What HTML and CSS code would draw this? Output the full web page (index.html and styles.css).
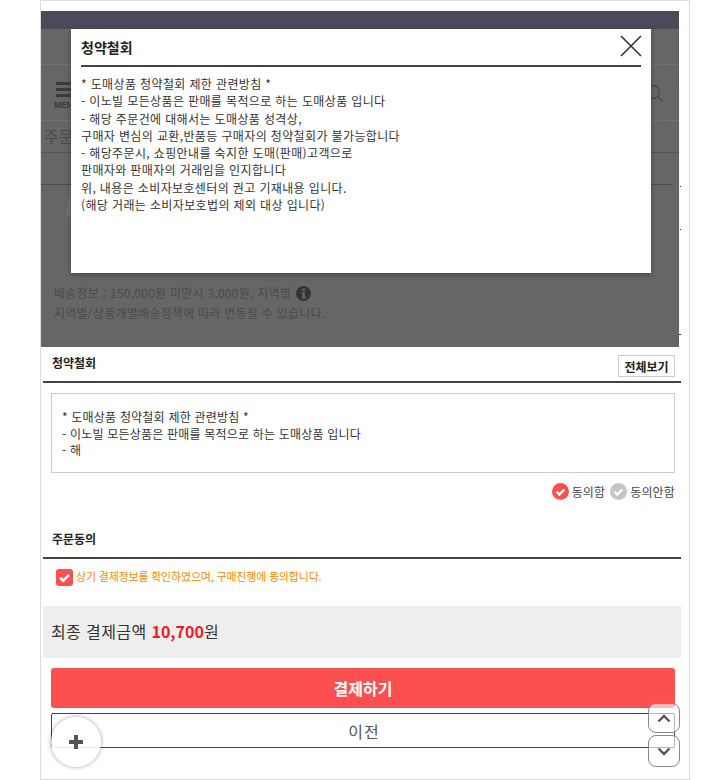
FILE: index.html
```html
<!DOCTYPE html>
<html lang="ko">

<head>
    <meta charset="UTF-8">
    <meta name="viewport" content="width=device-width, initial-scale=1.0">
    <title>주문결제</title>
    <link rel="stylesheet" href="styles.css">
</head>

<body>
    <div class="frame">
        <div class="dim">
            <div class="dim-top"></div>
            <div class="dim-row row-blank"></div>
            <div class="dim-row row-menu">
                <div class="menu-btn">
                    <span class="bar"></span>
                    <span class="bar"></span>
                    <span class="bar"></span>
                    <span class="menu-label">MENU</span>
                </div>
                <svg class="search-icon" width="27" height="26" viewBox="0 0 27 26">
                    <circle cx="16" cy="13" r="6.5" fill="none" stroke="#4a4a4a" stroke-width="1.3"/>
                    <path d="M20.6 17.6 L26 23" fill="none" stroke="#4a4a4a" stroke-width="1.3"/>
                </svg>
            </div>
            <div class="dim-row row-title">주문</div>
            <div class="dim-row row-product"></div>
            <div class="dim-row row-product-2">
                <svg class="thumb-edge" width="8" height="32" viewBox="0 0 8 32">
                    <path d="M6 0 L8 0 L8 30 L0 32 Z" fill="#717171"/>
                </svg>
            </div>
            <div class="delivery">
                <p>배송정보 : 150,000원 미만시 3,000원, 지역별
                    <svg class="info-icon" width="15" height="15" viewBox="0 0 15 15">
                        <circle cx="7.5" cy="7.5" r="7.5" fill="#333"/>
                        <rect x="6.5" y="2.5" width="2.4" height="2.4" fill="#666"/>
                        <path d="M5.5 6.2 H8.9 V10.8 H10 V12.4 H5.5 V10.8 H6.5 V7.8 H5.5 Z" fill="#666"/>
                    </svg>
                </p>
                <p>지역별/상품개별배송정책에 따라 변동될 수 있습니다.</p>
            </div>
            <div class="tick tick-1"></div>
            <div class="tick tick-2"></div>
            <div class="tick tick-3"></div>
            <div class="edge-strip"></div>

            <div class="modal">
                <div class="modal-head">
                    <h2>청약철회</h2>
                    <svg class="close-icon" width="22" height="22" viewBox="0 0 22 22">
                        <path d="M1 1 L21 21 M21 1 L1 21" fill="none" stroke="#333" stroke-width="1.6"/>
                    </svg>
                </div>
                <div class="modal-body">
                    <p>* 도매상품 청약철회 제한 관련방침 *</p>
                    <p>- 이노빌 모든상품은 판매를 목적으로 하는 도매상품 입니다</p>
                    <p>- 해당 주문건에 대해서는 도매상품 성격상,</p>
                    <p>구매자 변심의 교환,반품등 구매자의 청약철회가 불가능합니다</p>
                    <p>- 해당주문시, 쇼핑안내를 숙지한 도매(판매)고객으로</p>
                    <p>판매자와 판매자의 거래임을 인지합니다</p>
                    <p>위, 내용은 소비자보호센터의 권고 기재내용 입니다.</p>
                    <p>(해당 거래는 소비자보호법의 제외 대상 입니다)</p>
                </div>
            </div>
        </div>

        <div class="section">
            <div class="section-head">
                <h3>청약철회</h3>
                <button class="view-all">전체보기</button>
            </div>
            <div class="terms-box">
                <p>* 도매상품 청약철회 제한 관련방침 *</p>
                <p>- 이노빌 모든상품은 판매를 목적으로 하는 도매상품 입니다</p>
                <p>- 해</p>
            </div>
            <div class="agree-row">
                <svg class="check-icon" width="17" height="17" viewBox="0 0 18 18">
                    <circle cx="9" cy="9" r="9" fill="#fc5050"/>
                    <path d="M4.8 9.2 L7.8 12.2 L13.2 6.6" fill="none" stroke="#fff" stroke-width="2.6"/>
                </svg>
                <span>동의함</span>
                <svg class="check-icon" width="17" height="17" viewBox="0 0 18 18">
                    <circle cx="9" cy="9" r="9" fill="#c4c4c4"/>
                    <path d="M4.8 9.2 L7.8 12.2 L13.2 6.6" fill="none" stroke="#fff" stroke-width="2.6"/>
                </svg>
                <span>동의안함</span>
            </div>
        </div>

        <div class="section section-order">
            <div class="section-head">
                <h3>주문동의</h3>
            </div>
            <div class="order-check">
                <svg width="17" height="17" viewBox="0 0 17 17">
                    <rect width="17" height="17" rx="3" fill="#fc5050"/>
                    <path d="M4 8.6 L7.2 11.6 L13 5.8" fill="none" stroke="#fff" stroke-width="2.6"/>
                </svg>
                <span>상기 결제정보를 확인하였으며, 구매진행에 동의합니다.</span>
            </div>
        </div>

        <div class="total">최종 결제금액 <strong>10,700</strong>원</div>

        <div class="actions">
            <button class="btn-pay">결제하기</button>
            <button class="btn-prev">이전</button>
        </div>
    </div>

    <button class="float-plus" aria-label="더보기">
        <svg width="16" height="16" viewBox="0 0 16 16">
            <path d="M8 1 V15 M1 8 H15" fill="none" stroke="#555" stroke-width="4"/>
        </svg>
    </button>
    <button class="float-scroll scroll-up" aria-label="위로">
        <svg width="14" height="9" viewBox="0 0 14 9">
            <path d="M1.5 7.5 L7 2 L12.5 7.5" fill="none" stroke="#555" stroke-width="2.4"/>
        </svg>
    </button>
    <button class="float-scroll scroll-down" aria-label="아래로">
        <svg width="14" height="9" viewBox="0 0 14 9">
            <path d="M1.5 1.5 L7 7 L12.5 1.5" fill="none" stroke="#555" stroke-width="2.4"/>
        </svg>
    </button>
</body>

</html>
```

FILE: styles.css
```css
* {
    box-sizing: border-box;
}

html,
body {
    height: 780px;
    overflow: hidden;
}

body {
    margin: 0;
    background: white;
    color: #333;
    font-family: "Noto Sans CJK KR", "Noto Sans", sans-serif;
    font-size: 12px;
}

p,
h2,
h3 {
    margin: 0;
}

button {
    font-family: inherit;
    padding: 0;
    cursor: pointer;
}

.frame {
    width: 650px;
    height: 780px;
    margin-left: 40px;
    padding-top: 10px;
    border: 1px solid #ddd;
}

/* page behind the popup, darkened */
.dim {
    position: relative;
    width: 638px;
    height: 336px;
    background: #666;
}

.dim-top {
    height: 18px;
    background: #4a4a58;
}

.dim-row {
    border-bottom: 1px solid #707070;
}

.row-blank {
    height: 36px;
}

.row-menu {
    display: flex;
    justify-content: space-between;
    height: 56px;
    padding: 17px 15px 0 13px;
}

.menu-btn {
    display: flex;
    flex-direction: column;
    align-items: flex-end;
    width: 36px;
}

.bar {
    width: 34px;
    height: 3px;
    margin-bottom: 3px;
    background: #3c3c3c;
}

.menu-label {
    width: 100%;
    font-family: "Liberation Sans", sans-serif;
    font-size: 9px;
    font-weight: bold;
    letter-spacing: -0.5px;
    line-height: 10px;
    color: #3c3c3c;
}

.search-icon {
    margin-top: -3px;
}

.row-title {
    height: 32px;
    padding-left: 3px;
    border-bottom-color: #555;
    font-size: 16px;
    line-height: 31px;
    color: #4a4a4a;
}

.row-product {
    height: 32px;
    margin-right: 6px;
    border-bottom-color: #4c4c4c;
}

.row-product-2 {
    height: 32px;
    padding-left: 24px;
    border: none;
}

.thumb-edge {
    display: block;
}

.delivery {
    padding: 66px 0 0 13px;
    line-height: 19.5px;
    letter-spacing: 0.25px;
    color: #4a4a4a;
}

.info-icon {
    vertical-align: -3px;
    margin-left: 1px;
}

.tick {
    position: absolute;
    left: 638px;
    width: 2px;
    height: 1px;
    background: #333;
}

.tick-1 {
    top: 175px;
}

.tick-2 {
    top: 218px;
}

.tick-3 {
    top: 323px;
}

.edge-strip {
    position: absolute;
    left: 638px;
    top: 77px;
    width: 1px;
    height: 246px;
    background: #f3f3fa;
}

.modal {
    position: absolute;
    left: 30px;
    top: 18px;
    width: 580px;
    height: 244px;
    padding: 0 10px;
    background: white;
    box-shadow: 0 2px 6px rgba(0, 0, 0, 0.3);
}

.modal-head {
    display: flex;
    justify-content: space-between;
    align-items: center;
    height: 38px;
    border-bottom: 2px solid #444;
}

.modal-head h2 {
    font-size: 14px;
    font-weight: bold;
    color: #222;
}

.close-icon {
    margin-top: -2px;
    margin-right: -1px;
}

.modal-body {
    padding-top: 8px;
    line-height: 17.25px;
    letter-spacing: 0.37px;
    color: #333;
}

.section {
    width: 638px;
    margin-left: 2px;
}

.section-head {
    display: flex;
    justify-content: space-between;
    align-items: center;
    height: 36px;
    padding: 0 6px 4px 9px;
    border-bottom: 2px solid #444;
}

.section-head h3 {
    font-size: 12px;
    font-weight: bold;
    color: #222;
}

.view-all {
    width: 57px;
    height: 22px;
    margin-top: 8px;
    background: white;
    border: 1px solid #ccc;
    font-size: 12px;
    font-weight: bold;
    color: #222;
}

.terms-box {
    width: 624px;
    height: 80px;
    margin: 10px 0 0 8px;
    padding: 15px 10px 0 10px;
    border: 1px solid #ccc;
    line-height: 16.5px;
    letter-spacing: 0.2px;
    color: #333;
}

.agree-row {
    display: flex;
    justify-content: flex-end;
    align-items: center;
    gap: 3px;
    height: 18px;
    margin: 9px 6px 0 0;
    letter-spacing: 0.15px;
    color: #444;
}

.agree-row span + svg {
    margin-left: 2px;
}

.section-order {
    margin-top: 23px;
}

.order-check {
    display: flex;
    align-items: center;
    gap: 3px;
    height: 17px;
    margin: 10px 0 0 13px;
    font-size: 11px;
    letter-spacing: -0.2px;
    color: #ff8a00;
}

.order-check span {
    margin-top: -4px;
}

.total {
    width: 638px;
    height: 52px;
    margin: 20px 0 0 2px;
    padding-left: 8px;
    background: #eee;
    font-size: 16px;
    letter-spacing: 0.4px;
    line-height: 50px;
    color: #333;
}

.total strong {
    letter-spacing: 0;
    color: #ed1c24;
}

.actions {
    display: flex;
    flex-direction: column;
    gap: 5px;
    width: 624px;
    margin: 10px 0 0 10px;
}

.btn-pay {
    height: 40px;
    background: #fc5050;
    border: none;
    border-radius: 3px;
    color: white;
    font-size: 16px;
    font-weight: bold;
}

.btn-prev {
    height: 35px;
    padding-left: 2px;
    background: white;
    border: 1px solid #444;
    border-radius: 2px;
    color: #555;
    font-size: 16px;
    letter-spacing: 1px;
}

.float-plus {
    position: fixed;
    left: 51px;
    top: 717px;
    display: flex;
    justify-content: center;
    align-items: center;
    width: 50px;
    height: 50px;
    background: rgba(255, 255, 255, 0.9);
    border: none;
    border-radius: 50%;
    box-shadow: 0 0 4px rgba(0, 0, 0, 0.4);
}

.float-scroll {
    position: fixed;
    left: 648px;
    display: flex;
    justify-content: center;
    align-items: center;
    width: 32px;
    background: rgba(255, 255, 255, 0.6);
    border: 1px solid #888;
    border-radius: 8px;
}

.scroll-up {
    top: 703px;
    height: 30px;
}

.scroll-down {
    top: 735px;
    height: 32px;
}
```
